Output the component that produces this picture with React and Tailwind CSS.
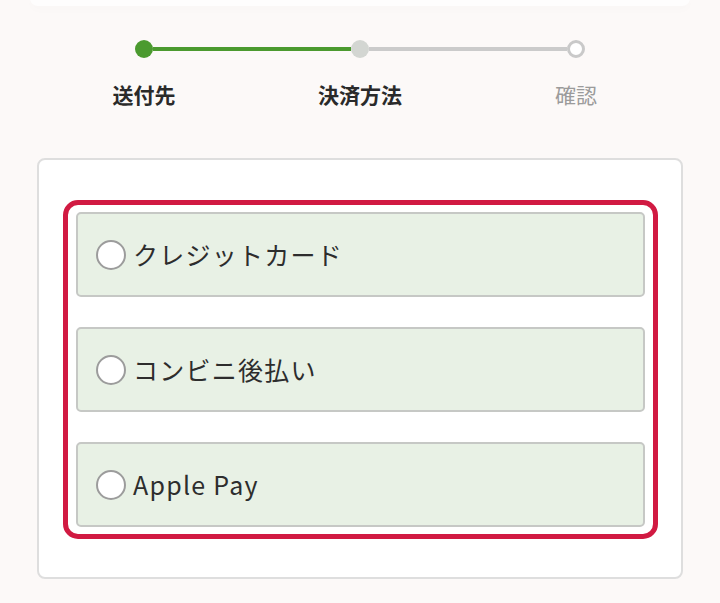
const steps = [
  { label: '送付先', state: 'done' },
  { label: '決済方法', state: 'current' },
  { label: '確認', state: 'todo' },
];

const methods = ['クレジットカード', 'コンビニ後払い', 'Apple Pay'];

function Stepper() {
  return (
    <div className="pt-[34px]">
      <div className="flex items-center px-[135px]">
        <span className="w-[18px] h-[18px] rounded-full bg-[#4b9a2f] shrink-0" />
        <span className="flex-1 h-[4px] bg-[#4b9a2f]" />
        <span className="w-[18px] h-[18px] rounded-full bg-[#d3d6d2] shrink-0" />
        <span className="flex-1 h-[4px] bg-[#cbcbcb]" />
        <span className="w-[18px] h-[18px] rounded-full border-[3px] border-[#c9c9c9] bg-white shrink-0" />
      </div>
      <div className="grid grid-cols-3 px-[36px] mt-[21px]">
        {steps.map((s) => (
          <p
            key={s.label}
            className={`text-center text-[21px] leading-[30px] ${
              s.state === 'todo' ? 'text-[#9b9b9b] font-normal' : 'text-[#2a2a2a] font-bold'
            }`}
          >
            {s.label}
          </p>
        ))}
      </div>
    </div>
  );
}

function MethodRow({ label }) {
  return (
    <label className="flex items-center h-[85px] pl-[18px] bg-[#e8f1e5] border-2 border-[#c6c8c5] rounded-[5px]">
      <span className="w-[30px] h-[30px] rounded-full border-2 border-[#9c9c9c] bg-white shrink-0" />
      <span className="ml-[7px] text-[25px] text-[#2d2d2d] tracking-[0.05em]">{label}</span>
    </label>
  );
}

export default function App() {
  return (
    <div
      className="min-h-[603px] bg-[#fcf9f8] overflow-hidden"
      style={{ fontFamily: '"Noto Sans CJK JP", "Noto Sans", sans-serif' }}
    >
      <div className="mx-[30px] h-[8px] -mt-[2px] bg-[#fefdfd] rounded-b-[24px] shadow-[0_3px_10px_rgba(0,0,0,0.02)]" />
      <Stepper />

      <div className="mx-[37px] w-[646px] mt-[49px] bg-white border-2 border-[#dedede] rounded-[8px] pt-[40px] pb-[38px] pl-[24px] pr-[23px]">
        <div className="border-[5px] border-[#d11a42] rounded-[15px] px-[8px] py-[7px] flex flex-col gap-[30px]">
          {methods.map((m) => (
            <MethodRow key={m} label={m} />
          ))}
        </div>
      </div>
    </div>
  );
}
